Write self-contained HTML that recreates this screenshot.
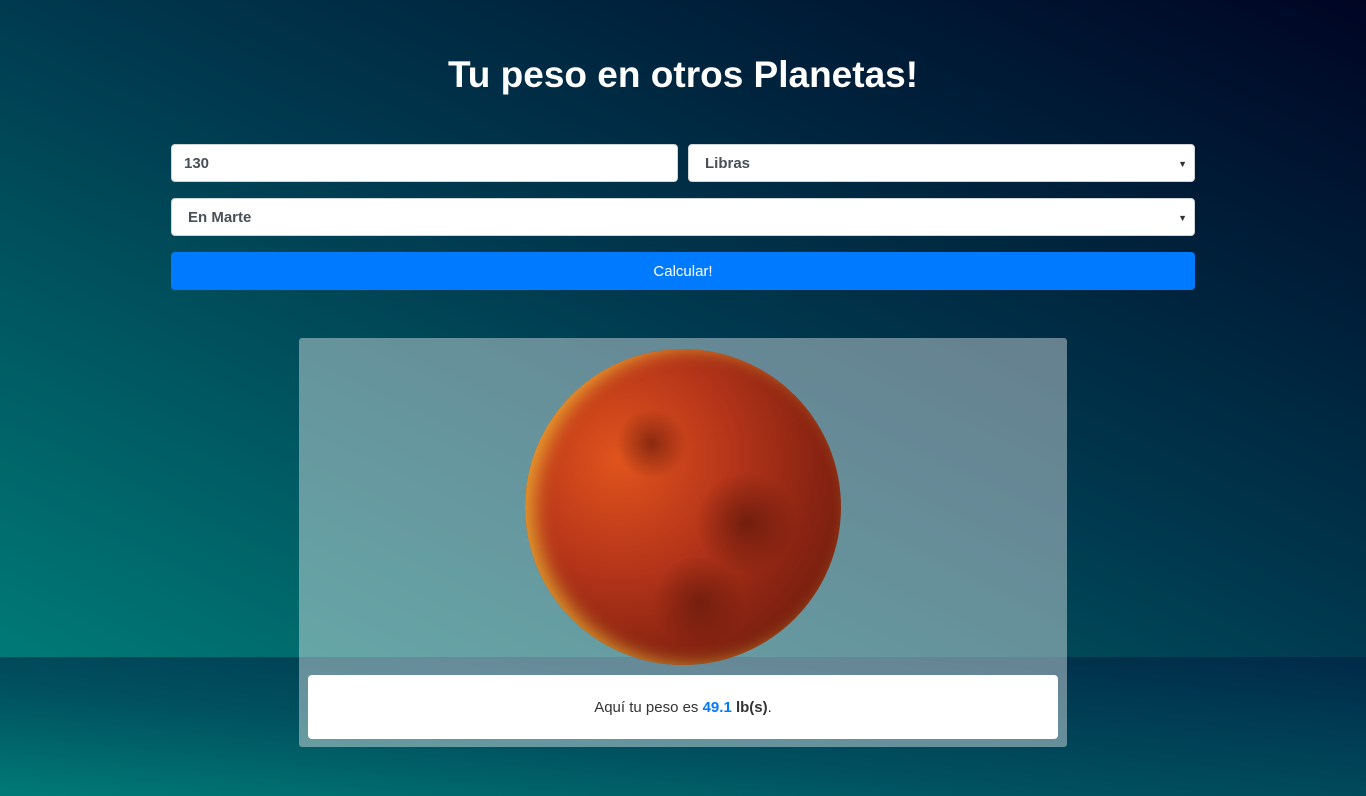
<!DOCTYPE html>
<html><head><meta charset="utf-8"><style>
html,body{margin:0;height:796px;overflow:hidden}
body{font-family:"Liberation Sans",sans-serif;background:linear-gradient(to top right,#007a76 0%,#003a50 50%,#000524 100%);background-size:100% 657px;background-repeat:no-repeat;position:relative}
.bot{position:absolute;left:0;top:657px;width:1366px;height:139px;background:linear-gradient(to top right,#007a76 0%,#00505f 40%,#002a48 100%)}
h1{position:absolute;top:50px;left:0;width:100%;text-align:center;margin:0;color:#fff;font-size:37px;font-weight:bold;line-height:50px}
.f{position:absolute;background:#fff;border:1px solid #ced4da;border-radius:4px;box-sizing:border-box;height:38px;color:#495057;font-weight:bold;font-size:15px;line-height:38px;padding-left:12px}
.f.s{padding-left:16px}
.ar{position:absolute;right:7px;top:0;font-size:9px;color:#333}
.btn{position:absolute;left:171px;top:252px;width:1024px;height:38px;background:#007bff;border-radius:4px;color:#fff;text-align:center;line-height:40px;font-size:15px}
.card{position:absolute;left:299px;top:338px;width:768px;height:409px;background:rgba(255,255,255,.4);border-radius:3px}
.mars{position:absolute;left:525px;top:349px;width:316px;height:316px;border-radius:50%;background:
radial-gradient(circle at 40% 30%,rgba(90,20,10,.6) 0,rgba(90,20,10,0) 12%),
radial-gradient(circle at 70% 55%,rgba(80,18,8,.6) 0,rgba(80,18,8,0) 18%),
radial-gradient(circle at 55% 80%,rgba(80,18,8,.5) 0,rgba(80,18,8,0) 15%),
radial-gradient(circle at 30% 35%,#e0541c 0%,#b8361a 35%,#8a2412 65%,#5e180c 100%);box-shadow:inset 10px 0 18px rgba(255,220,60,.6)}
.res{position:absolute;left:308px;top:675px;width:750px;height:64px;background:#fff;border-radius:4px;text-align:center;line-height:66px;color:#333;font-size:15px}
</style></head><body>
<div class="bot"></div>
<h1>Tu peso en otros Planetas!</h1>
<div class="f" style="left:171px;top:144px;width:507px">130</div>
<div class="f s" style="left:688px;top:144px;width:507px">Libras<span class="ar">▼</span></div>
<div class="f s" style="left:171px;top:198px;width:1024px">En Marte<span class="ar">▼</span></div>
<div class="btn">Calcular!</div>
<div class="card"></div>
<div class="mars"></div>
<div class="res">Aquí tu peso es <b style="color:#007bff">49.1</b> <b>lb(s)</b>.</div>
</body></html>
